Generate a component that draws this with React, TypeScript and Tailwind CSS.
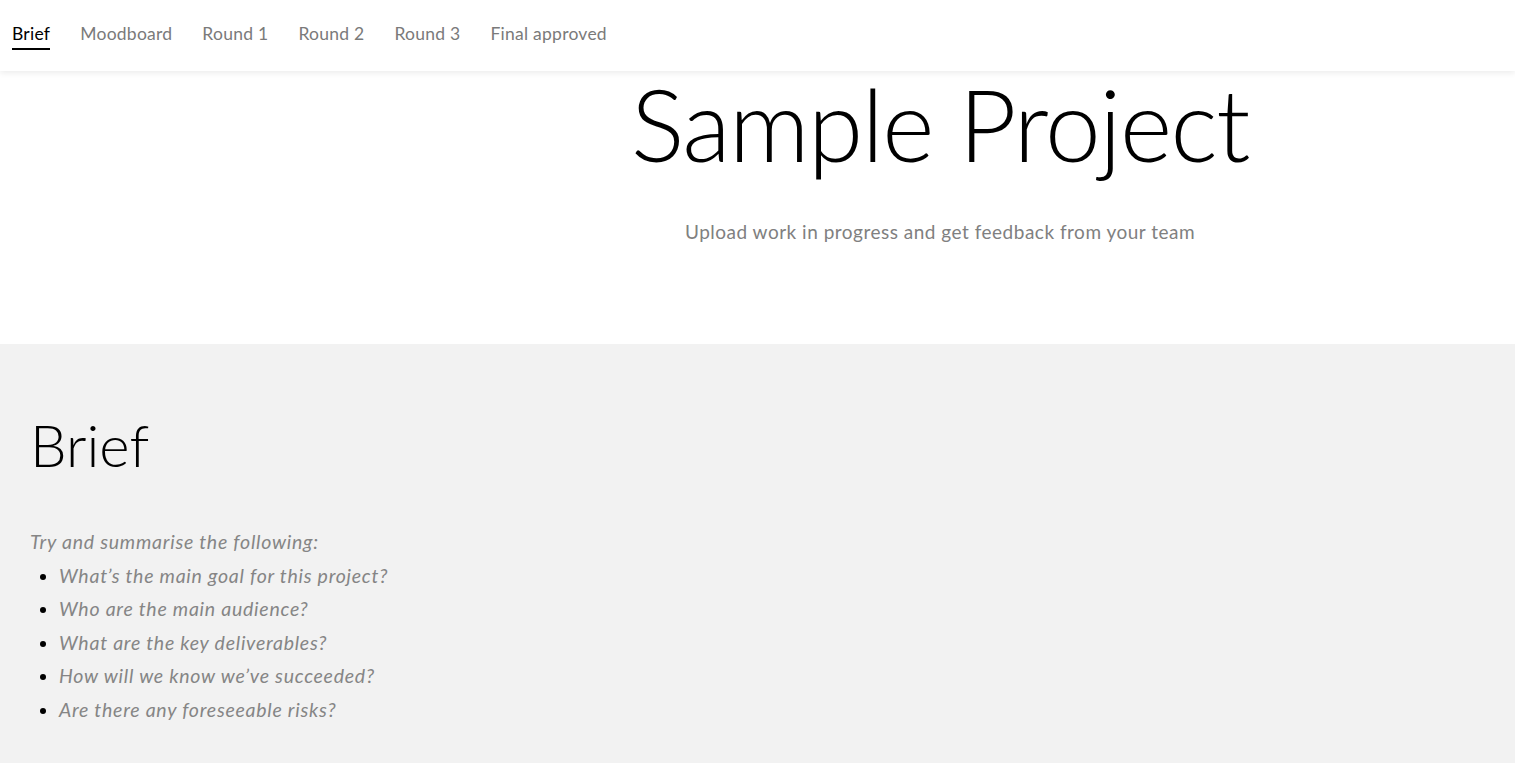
const tabs = ['Brief', 'Moodboard', 'Round 1', 'Round 2', 'Round 3', 'Final approved'];

const questions = [
  'What’s the main goal for this project?',
  'Who are the main audience?',
  'What are the key deliverables?',
  'How will we know we’ve succeeded?',
  'Are there any foreseeable risks?',
];

export default function App() {
  return (
    <div className="min-h-screen bg-white font-['Lato',sans-serif]">
      {/* Top tab bar */}
      <nav className="relative z-10 h-[71px] bg-white shadow-[0_2px_6px_rgba(0,0,0,0.08)] flex items-center px-3 pb-[2px] gap-[30px]">
        {tabs.map((t, i) => (
          <div key={t} className="relative">
            <span className={`text-[17.5px] tracking-[0.25px] ${i === 0 ? 'text-black' : 'text-[#7a7a7a]'}`}>{t}</span>
            {i === 0 && <div className="absolute left-0 right-0 -bottom-[2px] h-[2px] bg-black" />}
          </div>
        ))}
      </nav>

      {/* Hero */}
      <header className="flex h-[273px]">
        <div className="w-[365px] shrink-0" />
        <div className="flex-1 flex flex-col items-center">
          <h1 className="text-[100px] leading-none font-light tracking-[-1.5px] text-black mt-[2px]">Sample Project</h1>
          <p className="text-[19px] tracking-[0.5px] text-[#808080] mt-[45px]">Upload work in progress and get feedback from your team</p>
        </div>
      </header>

      {/* Brief section */}
      <section className="bg-[#f2f2f2] px-[30px] pt-[72px] pb-[40px]">
        <h2 className="text-[58px] leading-none font-light text-black">Brief</h2>
        <div className="mt-[51px] italic text-[19.5px] tracking-[0.75px] text-[#858585]">
          <p className="leading-[33.5px]">Try and summarise the following:</p>
          <ul className="list-disc pl-[29px] marker:text-black">
            {questions.map((q) => (
              <li key={q} className="leading-[33.5px]">{q}</li>
            ))}
          </ul>
        </div>
      </section>
    </div>
  );
}
